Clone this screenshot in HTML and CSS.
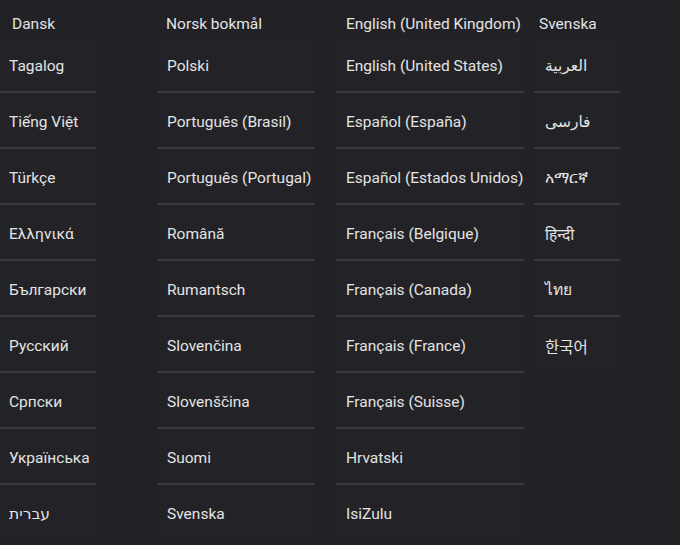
FILE: index.html
```html
<!DOCTYPE html>
<html lang="mul">
<head>
<meta charset="utf-8">
<title>Languages</title>
<link rel="stylesheet" href="styles.css">
</head>
<body>
<div class="board">
  <ul class="col col-1">
    <li class="head head-1">Dansk</li>
    <li class="cell">Tagalog</li>
    <li class="cell">Tiếng Việt</li>
    <li class="cell">Türkçe</li>
    <li class="cell">Ελληνικά</li>
    <li class="cell">Български</li>
    <li class="cell">Русский</li>
    <li class="cell">Српски</li>
    <li class="cell">Українська</li>
    <li class="cell last" dir="ltr"><span dir="rtl">עברית</span></li>
  </ul>
  <ul class="col col-2">
    <li class="head head-2">Norsk bokmål</li>
    <li class="cell">Polski</li>
    <li class="cell">Português (Brasil)</li>
    <li class="cell">Português (Portugal)</li>
    <li class="cell">Română</li>
    <li class="cell">Rumantsch</li>
    <li class="cell">Slovenčina</li>
    <li class="cell">Slovenščina</li>
    <li class="cell">Suomi</li>
    <li class="cell last">Svenska</li>
  </ul>
  <ul class="col col-3">
    <li class="head head-3">English (United Kingdom)</li>
    <li class="cell">English (United States)</li>
    <li class="cell">Español (España)</li>
    <li class="cell">Español (Estados Unidos)</li>
    <li class="cell">Français (Belgique)</li>
    <li class="cell">Français (Canada)</li>
    <li class="cell">Français (France)</li>
    <li class="cell">Français (Suisse)</li>
    <li class="cell">Hrvatski</li>
    <li class="cell last">IsiZulu</li>
  </ul>
  <ul class="col col-4">
    <li class="head head-4">Svenska</li>
    <li class="cell"><span dir="rtl">العربية</span></li>
    <li class="cell"><span dir="rtl">فارسی</span></li>
    <li class="cell">አማርኛ</li>
    <li class="cell">हिन्दी</li>
    <li class="cell">ไทย</li>
    <li class="cell last">한국어</li>
  </ul>
</div>
</body>
</html>
```
FILE: styles.css
```css
html, body {
  margin: 0;
  padding: 0;
  background: #222226;
}
body {
  width: 680px;
  height: 545px;
  overflow: hidden;
  font-family: Roboto, "Noto Sans", "DejaVu Sans", "Noto Sans CJK KR", sans-serif;
  font-size: 15.5px;
  color: #e4e4e4;
}
.board {
  display: flex;
  align-items: flex-start;
}
.col {
  list-style: none;
  margin: 0;
  padding: 0;
  display: flex;
  flex-direction: column;
}
.col-1 { width: 96px; }
.col-2 { width: 158px; margin-left: 61px; }
.col-3 { width: 188px; margin-left: 21px; }
.col-4 { width: 86px; margin-left: 10px; }

.head {
  height: 37px;
  box-sizing: border-box;
  padding-top: 14px;
  line-height: 20px;
  white-space: nowrap;
}
.head-1 { padding-left: 12px; }
.head-2 { padding-left: 9px; }
.head-3 { padding-left: 10px; }
.head-4 { padding-left: 5px; }

.cell {
  height: 56px;
  box-sizing: border-box;
  padding-top: 3px;
  padding-left: 10px;
  display: flex;
  align-items: center;
  white-space: nowrap;
  background: #232327;
  border-bottom: 2px solid #3a3a3f;
}
.col-1 .cell { padding-left: 9px; }
.col-4 .cell { padding-left: 11px; }
.cell.last {
  border-bottom-color: transparent;
}
```
